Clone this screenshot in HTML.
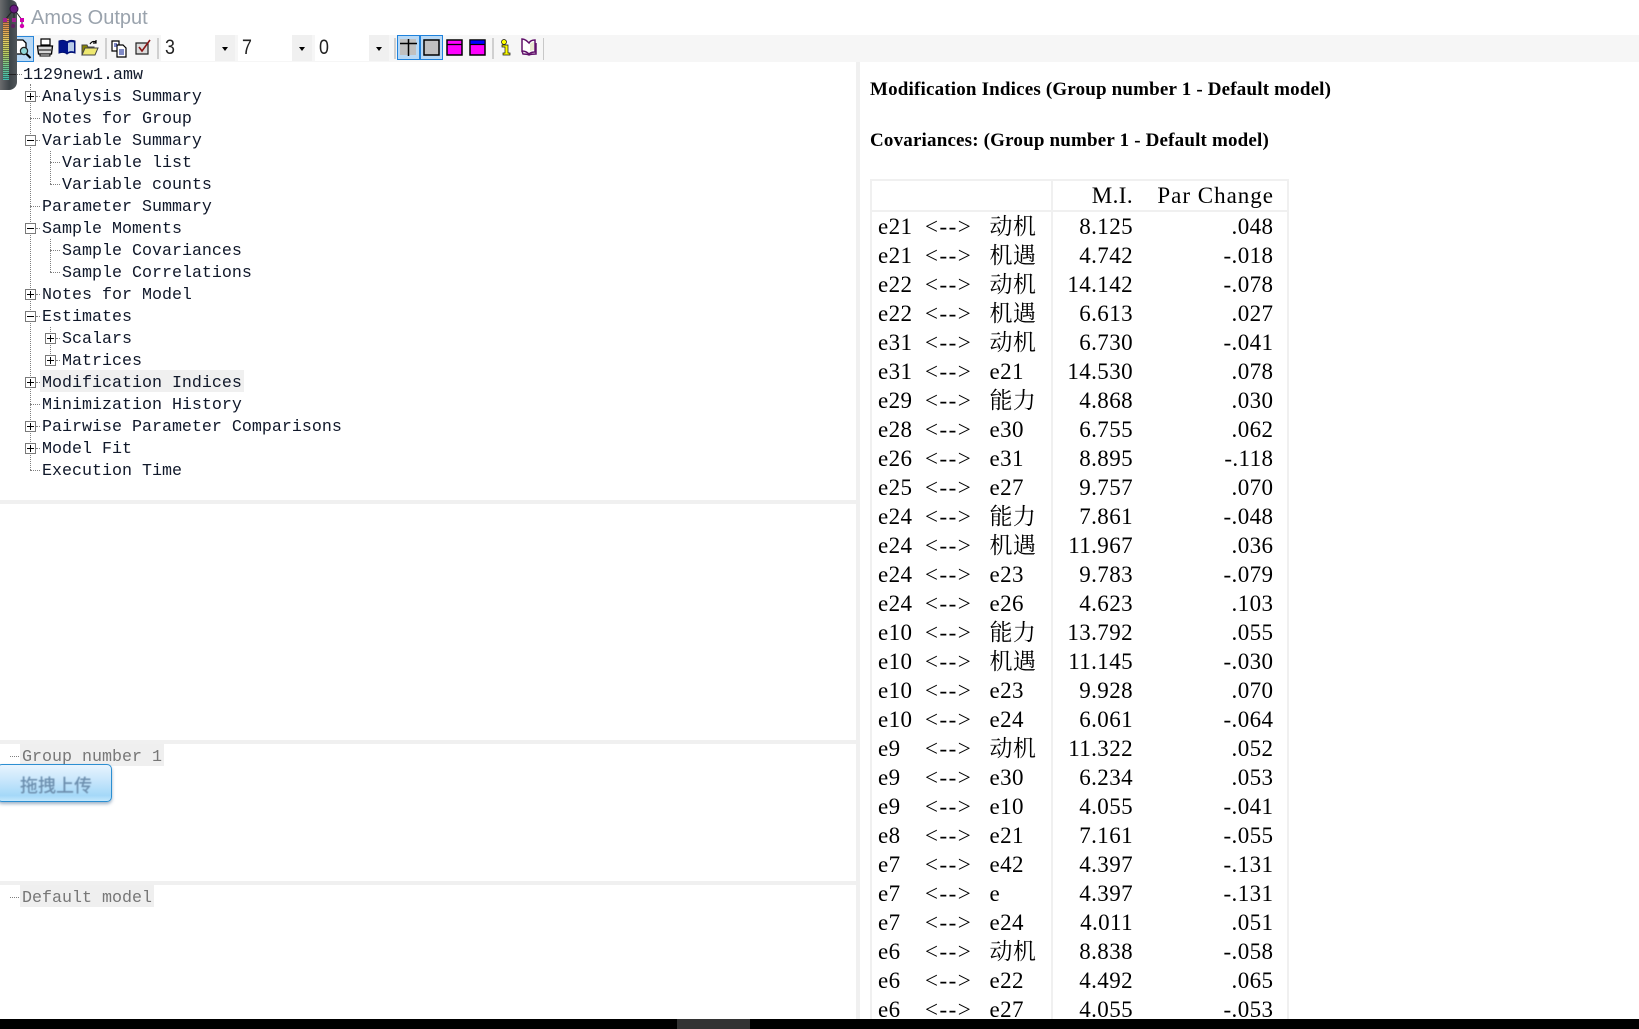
<!DOCTYPE html>
<html>
<head>
<meta charset="utf-8">
<title>Amos Output</title>
<style>
html,body{margin:0;padding:0;background:#fff;}
#p{position:relative;width:1639px;height:1029px;overflow:hidden;background:#fff;}
.a{position:absolute;}
.t{position:absolute;font:16.67px/22px "Liberation Mono","Noto Sans CJK SC",monospace;color:#10182a;white-space:pre;height:22px;}
.b{position:absolute;width:9px;height:9px;border:1px solid #7a7a7a;background:#fff;}
.b:before{content:"";position:absolute;left:1px;right:1px;top:4px;height:1px;background:#000;}
.b.p:after{content:"";position:absolute;top:1px;bottom:1px;left:4px;width:1px;background:#000;}
.h{position:absolute;height:0;border-top:1px dotted #808080;}
.v{position:absolute;width:0;border-left:1px dotted #808080;}
.s{position:absolute;top:38px;width:2px;height:21px;background:#d0d0d0;}
.r{position:absolute;left:0;width:1639px;height:29px;font:23px/29px "Liberation Serif","Noto Serif CJK SC",serif;color:#000;letter-spacing:.4px;}
.r span{position:absolute;top:0;white-space:pre;}
.c1{left:878px;}
.c2{left:925px;letter-spacing:1.5px;}
.c3{left:989.500px;}
.c4{right:506px;}
.c5{right:365.600px;}
.hd{position:absolute;left:870px;font:bold 19px/24px "Liberation Serif",serif;color:#000;white-space:pre;letter-spacing:.18px;}
.cb{position:absolute;top:35px;height:26px;background:#fff;font:21px/26px "Liberation Sans",sans-serif;color:#222;}
.cb span{transform:scaleX(.85);transform-origin:0 50%;}
.ar{position:absolute;top:35px;width:20px;height:26px;background:#f0f0f0;}
.ar:after{content:"";position:absolute;left:7px;top:12px;border-left:3px solid transparent;border-right:3px solid transparent;border-top:4px solid #000;}
</style>
</head>
<body>
<div id="p">
<!-- title -->
<div class="a" style="left:31px;top:5px;font:20px/26px 'Liberation Sans',sans-serif;color:#9aa3ad;">Amos Output</div>

<!-- toolbar -->
<div class="a" style="left:0;top:35px;width:1639px;height:27px;background:#f6f6f6;"></div>
<div class="a" style="left:10px;top:36px;width:22px;height:24px;background:#b9d9f5;border:1px solid #2a86d8;"></div>
<svg class="a" style="left:12px;top:38px;" width="22" height="22" viewBox="0 0 22 22"><path d="M3 2h8l3 3v11H3z" fill="#fff" stroke="#000" stroke-width="1.300"/><circle cx="12" cy="13" r="3.600" fill="#8fd6d6" stroke="#222" stroke-width="1.200"/><path d="M14.500 16l4 4" stroke="#000" stroke-width="2"/></svg>
<svg class="a" style="left:36px;top:38px;" width="18" height="20" viewBox="0 0 18 20"><path d="M5 1h9v6H5z" fill="#fff" stroke="#000" stroke-width="1.200"/><path d="M1.500 8h15l-1 8h-13z" fill="#d8d8d8" stroke="#000" stroke-width="1.300"/><path d="M3 12h12M4 16h10v2H4z" fill="#fff" stroke="#000"/></svg>
<svg class="a" style="left:58px;top:39px;" width="18" height="18" viewBox="0 0 18 18"><path d="M1 2c3-1 6-1 8 1 2-2 5-2 8-1v12c-3-1-6-1-8 1-2-2-5-2-8-1z" fill="#00148c" stroke="#001070"/><path d="M10 4c2-1 4-1 6-.5v9c-2-.5-4-.5-6 .5z" fill="#b8cce8"/></svg>
<svg class="a" style="left:81px;top:39px;" width="18" height="18" viewBox="0 0 18 18"><path d="M1 6h5l1 2h6v8H1z" fill="#8a8400" stroke="#444"/><path d="M1 16l3-7h13l-3 7z" fill="#eee870" stroke="#444"/><path d="M9 5c2-3 4-3 6-2M15 1v3h-3" fill="none" stroke="#000" stroke-width="1.200"/></svg>
<div class="s" style="left:105px;"></div>
<svg class="a" style="left:111px;top:40px;" width="16" height="18" viewBox="0 0 16 18"><path d="M1 1h7v10H1z" fill="#fff" stroke="#000" stroke-width="1.200"/><path d="M6 5h6l3 3v9H6z" fill="#fff" stroke="#000" stroke-width="1.200"/><path d="M8 10h5M8 12h5M8 14h5M3 4h3M3 6h3" stroke="#00148c"/></svg>
<svg class="a" style="left:135px;top:38px;" width="17" height="18" viewBox="0 0 17 18"><path d="M1 5h12v11H1z" fill="#dcdcdc" stroke="#222" stroke-width="1.200"/><path d="M4 9l3 4 8-11" fill="none" stroke="#8a1818" stroke-width="1.600"/></svg>
<div class="s" style="left:157px;"></div>

<div class="cb" style="left:161px;width:54px;"><span style="position:absolute;left:4px;">3</span></div><div class="ar" style="left:215px;"></div>
<div class="cb" style="left:238px;width:54px;"><span style="position:absolute;left:4px;">7</span></div><div class="ar" style="left:292px;"></div>
<div class="cb" style="left:315px;width:54px;"><span style="position:absolute;left:4px;">0</span></div><div class="ar" style="left:369px;"></div>

<div class="s" style="left:394px;"></div>
<div class="a" style="left:397px;top:35px;width:21px;height:23px;background:#b9d9f5;border:1px solid #1f82dc;"></div>
<div class="a" style="left:420px;top:35px;width:21px;height:23px;background:#b9d9f5;border:1px solid #1f82dc;"></div>
<svg class="a" style="left:399px;top:38px;" width="19" height="19" viewBox="0 0 19 19"><rect x="1" y="1" width="16" height="16" fill="#c0c0c0"/><path d="M9.500 1v17M1 5.500h17" stroke="#000" stroke-width="1.500"/></svg>
<svg class="a" style="left:422px;top:38px;" width="19" height="19" viewBox="0 0 19 19"><rect x="2" y="2" width="15" height="15" fill="#c0c0c0" stroke="#000" stroke-width="1.500"/></svg>
<svg class="a" style="left:445px;top:38px;" width="19" height="19" viewBox="0 0 19 19"><rect x="2" y="2" width="15" height="15" fill="#ff00ff" stroke="#000" stroke-width="1.500"/><path d="M2 6.500h15" stroke="#000" stroke-width="1.300"/></svg>
<svg class="a" style="left:468px;top:38px;" width="19" height="19" viewBox="0 0 19 19"><rect x="2" y="2" width="15" height="15" fill="#ff00ff" stroke="#000" stroke-width="1.500"/><rect x="2.500" y="2.500" width="14" height="3.500" fill="#0000ff"/><path d="M2 6.500h15" stroke="#000" stroke-width="1.200"/></svg>
<div class="s" style="left:492px;"></div>
<svg class="a" style="left:498px;top:38px;" width="16" height="19" viewBox="0 0 16 19"><circle cx="6" cy="4" r="2.500" fill="#ffff00" stroke="#111" stroke-width=".7"/><path d="M4 7h6v8h2v2H5v-2h2V9H4z" fill="#ffff00" stroke="#111" stroke-width=".7"/></svg>
<svg class="a" style="left:520px;top:38px;" width="18" height="19" viewBox="0 0 18 19"><path d="M2 1c3 0 5 2 7 4 1-2 3-3 6-3v12c-3 0-5 1-6 2-2-2-4-3-7-3z" fill="#fff" stroke="#60106a" stroke-width="1.500"/><path d="M2 13l1 3c2 0 4 0 6 1 2-1 5-1 7-1V5" fill="none" stroke="#60106a" stroke-width="1.500"/><path d="M10 6c1-1 3-2 4-2v8c-1 0-3 .5-4 1.500z" fill="#e8e8d0"/></svg>
<div class="a" style="left:543px;top:38px;width:1px;height:22px;background:#c8c8c8;"></div>

<!-- panel dividers -->
<div class="a" style="left:856px;top:62px;width:4px;height:957px;background:#f0f0f0;"></div>
<div class="a" style="left:0;top:500px;width:856px;height:4px;background:#f0f0f0;"></div>
<div class="a" style="left:0;top:740px;width:856px;height:4px;background:#f0f0f0;"></div>
<div class="a" style="left:0;top:881px;width:856px;height:4px;background:#f0f0f0;"></div>

<!-- tree connectors -->
<div class="v" style="left:30px;top:84px;height:386px;"></div>
<div class="v" style="left:50px;top:151px;height:33px;"></div>
<div class="v" style="left:50px;top:239px;height:33px;"></div>
<div class="v" style="left:50px;top:327px;height:33px;"></div>
<div class="h" style="left:16px;top:74px;width:6px;"></div>
<div class="h" style="left:30px;top:118px;width:10px;"></div>
<div class="h" style="left:30px;top:206px;width:10px;"></div>
<div class="h" style="left:30px;top:404px;width:10px;"></div>
<div class="h" style="left:30px;top:470px;width:10px;"></div>
<div class="h" style="left:36px;top:96px;width:4px;"></div>
<div class="h" style="left:36px;top:140px;width:4px;"></div>
<div class="h" style="left:36px;top:228px;width:4px;"></div>
<div class="h" style="left:36px;top:294px;width:4px;"></div>
<div class="h" style="left:36px;top:316px;width:4px;"></div>
<div class="h" style="left:36px;top:382px;width:4px;"></div>
<div class="h" style="left:36px;top:426px;width:4px;"></div>
<div class="h" style="left:36px;top:448px;width:4px;"></div>
<div class="h" style="left:50px;top:162px;width:10px;"></div>
<div class="h" style="left:50px;top:184px;width:10px;"></div>
<div class="h" style="left:50px;top:250px;width:10px;"></div>
<div class="h" style="left:50px;top:272px;width:10px;"></div>
<div class="h" style="left:56px;top:338px;width:4px;"></div>
<div class="h" style="left:56px;top:360px;width:4px;"></div>

<div class="a" style="left:40px;top:370px;width:204px;height:22px;background:#f0f0f0;"></div>

<!-- tree boxes -->
<div class="b p" style="left:25px;top:91px;"></div>
<div class="b" style="left:25px;top:135px;"></div>
<div class="b" style="left:25px;top:223px;"></div>
<div class="b p" style="left:25px;top:289px;"></div>
<div class="b" style="left:25px;top:311px;"></div>
<div class="b p" style="left:45px;top:333px;"></div>
<div class="b p" style="left:45px;top:355px;"></div>
<div class="b p" style="left:25px;top:377px;"></div>
<div class="b p" style="left:25px;top:421px;"></div>
<div class="b p" style="left:25px;top:443px;"></div>

<!-- tree text -->
<div class="t" style="left:23px;top:65px;">1129new1.amw</div>
<div class="t" style="left:42px;top:87px;">Analysis Summary</div>
<div class="t" style="left:42px;top:109px;">Notes for Group</div>
<div class="t" style="left:42px;top:131px;">Variable Summary</div>
<div class="t" style="left:62px;top:153px;">Variable list</div>
<div class="t" style="left:62px;top:175px;">Variable counts</div>
<div class="t" style="left:42px;top:197px;">Parameter Summary</div>
<div class="t" style="left:42px;top:219px;">Sample Moments</div>
<div class="t" style="left:62px;top:241px;">Sample Covariances</div>
<div class="t" style="left:62px;top:263px;">Sample Correlations</div>
<div class="t" style="left:42px;top:285px;">Notes for Model</div>
<div class="t" style="left:42px;top:307px;">Estimates</div>
<div class="t" style="left:62px;top:329px;">Scalars</div>
<div class="t" style="left:62px;top:351px;">Matrices</div>
<div class="t" style="left:42px;top:373px;">Modification Indices</div>
<div class="t" style="left:42px;top:395px;">Minimization History</div>
<div class="t" style="left:42px;top:417px;">Pairwise Parameter Comparisons</div>
<div class="t" style="left:42px;top:439px;">Model Fit</div>
<div class="t" style="left:42px;top:461px;">Execution Time</div>

<!-- group -->
<div class="a" style="left:20px;top:744px;width:144px;height:22px;background:#efefef;"></div>
<div class="h" style="left:10px;top:756px;width:9px;"></div>
<div class="t" style="left:22px;top:747px;color:#777;">Group number 1</div>
<div class="a" style="left:20px;top:885px;width:134px;height:22px;background:#efefef;"></div>
<div class="h" style="left:10px;top:897px;width:9px;"></div>
<div class="t" style="left:22px;top:888px;color:#777;">Default model</div>

<!-- button -->
<div class="a" style="left:-3px;top:764px;width:113px;height:36px;border:1px solid #2c8fd2;border-radius:5px;background:linear-gradient(#e8f4fe 0%,#c2e4fb 50%,#a4d8f8 85%,#c4e8fc 100%);box-shadow:0 2px 3px rgba(60,100,140,.5);"></div>
<div class="a" style="left:20px;top:773px;font:500 18px/24px 'Noto Sans CJK SC',sans-serif;color:#6d8fae;filter:blur(.4px);">拖拽上传</div>

<!-- left overlay -->
<div class="a" style="left:0;top:0;width:17px;height:90px;background:linear-gradient(90deg,#6a6c6e,#3d4448 55%,#50565a);border-radius:0 6px 8px 0;"></div>
<div class="a" style="left:3px;top:18px;width:6px;height:62px;background:repeating-linear-gradient(0deg,transparent 0 1px,rgba(40,40,40,.55) 1px 2px),linear-gradient(#c96b4a 0%,#e5a050 18%,#e5d060 38%,#b8cf60 58%,#70c890 78%,#3fbcae 100%);"></div>
<svg class="a" style="left:0;top:0;" width="30" height="32" viewBox="0 0 30 32"><path d="M14 9L5 20M14 9v11M14 9l8 11v6" fill="none" stroke="#222" stroke-width="1"/><circle cx="14" cy="9" r="4" fill="#6a1a80" stroke="#301040"/><rect x="3" y="18" width="4" height="4" fill="#a02090"/><rect x="12" y="18" width="4" height="4" fill="#a02090"/><rect x="20" y="18" width="4" height="4" fill="#d000b0"/><circle cx="22" cy="26" r="2.200" fill="#d000b0"/><circle cx="13" cy="26" r="2" fill="#602060"/></svg>
<div class="a" style="left:8px;top:74px;width:8px;height:1px;background:#222;"></div>

<!-- right content -->
<div class="hd" style="top:78px;">Modification Indices (Group number 1 - Default model)</div>
<div class="hd" style="top:129px;">Covariances: (Group number 1 - Default model)</div>

<!-- table lines -->
<div class="a" style="left:870px;top:179px;width:419px;height:2px;background:#f0f0f0;"></div>
<div class="a" style="left:870px;top:210px;width:419px;height:2px;background:#f0f0f0;"></div>
<div class="a" style="left:870px;top:179px;width:2px;height:840px;background:#f0f0f0;"></div>
<div class="a" style="left:1051px;top:179px;width:2px;height:840px;background:#f0f0f0;"></div>
<div class="a" style="left:1287px;top:179px;width:2px;height:840px;background:#f0f0f0;"></div>

<div class="r" style="top:181px;"><span class="c4">M.I.</span><span class="c5" style="letter-spacing:1px;right:365px;">Par Change</span></div>
<div class="r" style="top:212px;"><span class="c1">e21</span><span class="c2">&lt;--&gt;</span><span class="c3">动机</span><span class="c4">8.125</span><span class="c5">.048</span></div>
<div class="r" style="top:241px;"><span class="c1">e21</span><span class="c2">&lt;--&gt;</span><span class="c3">机遇</span><span class="c4">4.742</span><span class="c5">-.018</span></div>
<div class="r" style="top:270px;"><span class="c1">e22</span><span class="c2">&lt;--&gt;</span><span class="c3">动机</span><span class="c4">14.142</span><span class="c5">-.078</span></div>
<div class="r" style="top:299px;"><span class="c1">e22</span><span class="c2">&lt;--&gt;</span><span class="c3">机遇</span><span class="c4">6.613</span><span class="c5">.027</span></div>
<div class="r" style="top:328px;"><span class="c1">e31</span><span class="c2">&lt;--&gt;</span><span class="c3">动机</span><span class="c4">6.730</span><span class="c5">-.041</span></div>
<div class="r" style="top:357px;"><span class="c1">e31</span><span class="c2">&lt;--&gt;</span><span class="c3">e21</span><span class="c4">14.530</span><span class="c5">.078</span></div>
<div class="r" style="top:386px;"><span class="c1">e29</span><span class="c2">&lt;--&gt;</span><span class="c3">能力</span><span class="c4">4.868</span><span class="c5">.030</span></div>
<div class="r" style="top:415px;"><span class="c1">e28</span><span class="c2">&lt;--&gt;</span><span class="c3">e30</span><span class="c4">6.755</span><span class="c5">.062</span></div>
<div class="r" style="top:444px;"><span class="c1">e26</span><span class="c2">&lt;--&gt;</span><span class="c3">e31</span><span class="c4">8.895</span><span class="c5">-.118</span></div>
<div class="r" style="top:473px;"><span class="c1">e25</span><span class="c2">&lt;--&gt;</span><span class="c3">e27</span><span class="c4">9.757</span><span class="c5">.070</span></div>
<div class="r" style="top:502px;"><span class="c1">e24</span><span class="c2">&lt;--&gt;</span><span class="c3">能力</span><span class="c4">7.861</span><span class="c5">-.048</span></div>
<div class="r" style="top:531px;"><span class="c1">e24</span><span class="c2">&lt;--&gt;</span><span class="c3">机遇</span><span class="c4">11.967</span><span class="c5">.036</span></div>
<div class="r" style="top:560px;"><span class="c1">e24</span><span class="c2">&lt;--&gt;</span><span class="c3">e23</span><span class="c4">9.783</span><span class="c5">-.079</span></div>
<div class="r" style="top:589px;"><span class="c1">e24</span><span class="c2">&lt;--&gt;</span><span class="c3">e26</span><span class="c4">4.623</span><span class="c5">.103</span></div>
<div class="r" style="top:618px;"><span class="c1">e10</span><span class="c2">&lt;--&gt;</span><span class="c3">能力</span><span class="c4">13.792</span><span class="c5">.055</span></div>
<div class="r" style="top:647px;"><span class="c1">e10</span><span class="c2">&lt;--&gt;</span><span class="c3">机遇</span><span class="c4">11.145</span><span class="c5">-.030</span></div>
<div class="r" style="top:676px;"><span class="c1">e10</span><span class="c2">&lt;--&gt;</span><span class="c3">e23</span><span class="c4">9.928</span><span class="c5">.070</span></div>
<div class="r" style="top:705px;"><span class="c1">e10</span><span class="c2">&lt;--&gt;</span><span class="c3">e24</span><span class="c4">6.061</span><span class="c5">-.064</span></div>
<div class="r" style="top:734px;"><span class="c1">e9</span><span class="c2">&lt;--&gt;</span><span class="c3">动机</span><span class="c4">11.322</span><span class="c5">.052</span></div>
<div class="r" style="top:763px;"><span class="c1">e9</span><span class="c2">&lt;--&gt;</span><span class="c3">e30</span><span class="c4">6.234</span><span class="c5">.053</span></div>
<div class="r" style="top:792px;"><span class="c1">e9</span><span class="c2">&lt;--&gt;</span><span class="c3">e10</span><span class="c4">4.055</span><span class="c5">-.041</span></div>
<div class="r" style="top:821px;"><span class="c1">e8</span><span class="c2">&lt;--&gt;</span><span class="c3">e21</span><span class="c4">7.161</span><span class="c5">-.055</span></div>
<div class="r" style="top:850px;"><span class="c1">e7</span><span class="c2">&lt;--&gt;</span><span class="c3">e42</span><span class="c4">4.397</span><span class="c5">-.131</span></div>
<div class="r" style="top:879px;"><span class="c1">e7</span><span class="c2">&lt;--&gt;</span><span class="c3">e</span><span class="c4">4.397</span><span class="c5">-.131</span></div>
<div class="r" style="top:908px;"><span class="c1">e7</span><span class="c2">&lt;--&gt;</span><span class="c3">e24</span><span class="c4">4.011</span><span class="c5">.051</span></div>
<div class="r" style="top:937px;"><span class="c1">e6</span><span class="c2">&lt;--&gt;</span><span class="c3">动机</span><span class="c4">8.838</span><span class="c5">-.058</span></div>
<div class="r" style="top:966px;"><span class="c1">e6</span><span class="c2">&lt;--&gt;</span><span class="c3">e22</span><span class="c4">4.492</span><span class="c5">.065</span></div>
<div class="r" style="top:995px;"><span class="c1">e6</span><span class="c2">&lt;--&gt;</span><span class="c3">e27</span><span class="c4">4.055</span><span class="c5">-.053</span></div>

<!-- bottom bar -->
<div class="a" style="left:0;top:1019px;width:1639px;height:10px;background:#000;"></div>
<div class="a" style="left:677px;top:1019px;width:73px;height:10px;background:#333;"></div>
</div>
</body>
</html>
